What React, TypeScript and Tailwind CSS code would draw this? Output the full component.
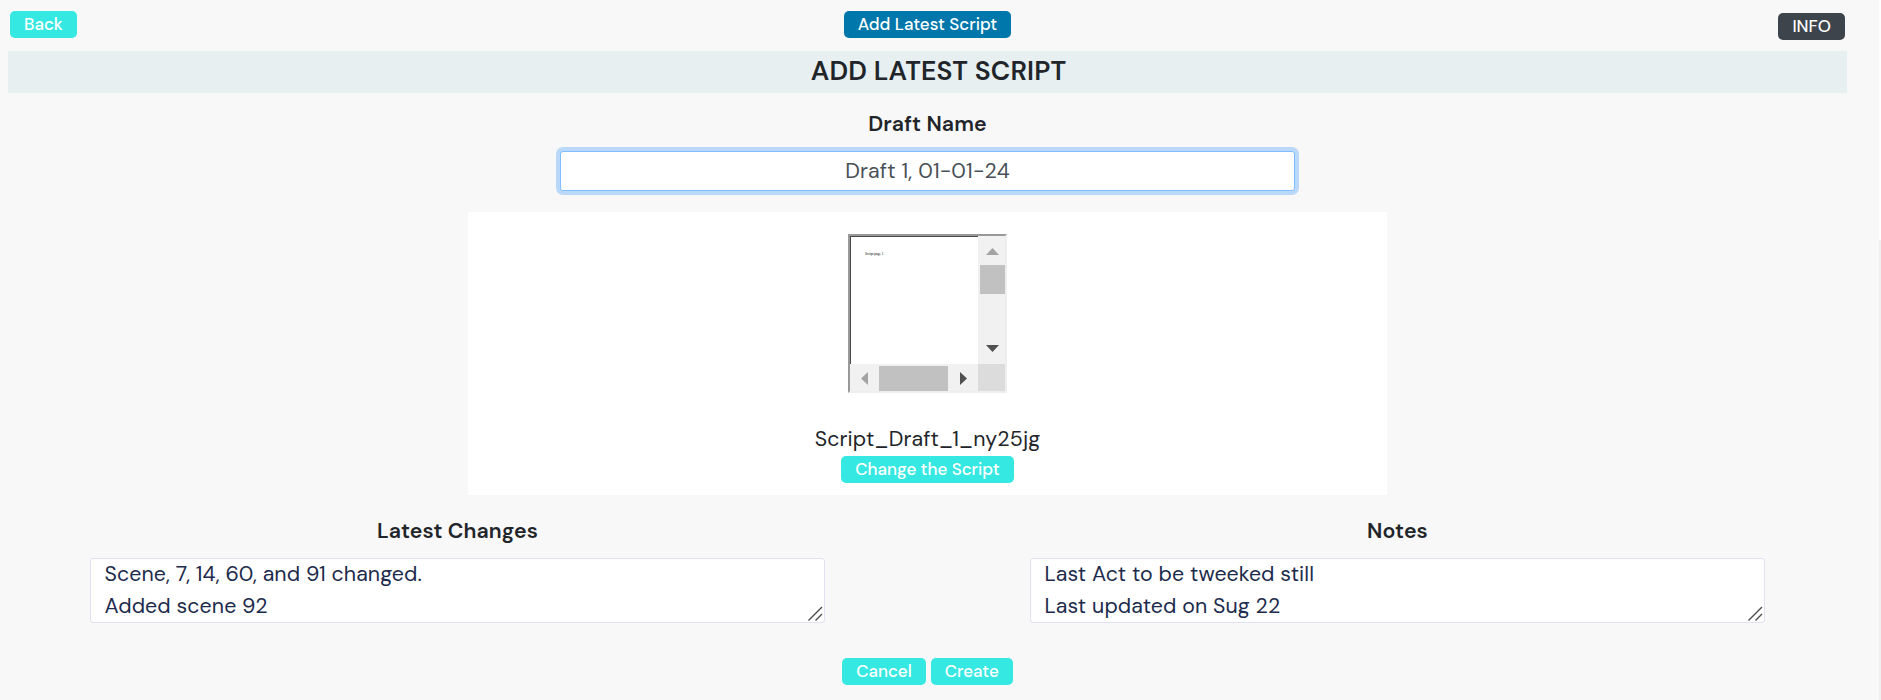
import type { ReactNode } from 'react';

const tones = {
  teal: 'bg-[#35e8e1]',
  blue: 'bg-[#0077aa]',
  dark: 'bg-[#3d444b]',
};

function Button({ tone = 'teal', children }: { tone?: keyof typeof tones; children: ReactNode }) {
  return (
    <button
      type="button"
      className={`flex h-[27px] items-center whitespace-nowrap rounded-[5px] px-[14px] text-[17px] font-medium leading-[27px] text-white ${tones[tone]}`}
    >
      {children}
    </button>
  );
}

function Label({ children }: { children: ReactNode }) {
  return <div className="h-8 text-center font-semibold tracking-[0.1px]">{children}</div>;
}

function NotesField({ label, lines }: { label: string; lines: string[] }) {
  return (
    <div className="w-[735px]">
      <Label>{label}</Label>
      <div className="relative mt-[11px] h-[65px] rounded-[3px] border border-[#e2e1f1] bg-white pl-[13.5px] tracking-[0.09px] text-[#1c2b4b]">
        <div className="-mt-px">
          {lines.map((line) => (
            <div key={line}>{line}</div>
          ))}
        </div>
        <svg
          className="absolute bottom-[1px] right-[1px]"
          width="16"
          height="16"
          viewBox="0 0 16 16"
          fill="none"
          stroke="#4a4a4a"
          strokeWidth="1.4"
        >
          <path d="M1.5 15.5 15 2M8.5 15.5 15 9" />
        </svg>
      </div>
    </div>
  );
}

function ScriptPreview() {
  return (
    <div className="grid h-[159px] w-[159px] grid-cols-[128px_27px] grid-rows-[128px_27px] border-2 border-b-[#eeeeee] border-l-[#999999] border-r-[#eeeeee] border-t-[#999999]">
      <div className="border-l border-t border-[#4a4a4a] bg-white pl-[14px] pt-[15px]">
        <div className="font-['Liberation_Serif'] text-[3.5px] leading-[4px] tracking-normal text-black">
          Script page 1
        </div>
      </div>
      <div className="flex flex-col items-end bg-[#f1f1f1] pt-3">
        <svg className="mr-1.5" width="13" height="7" viewBox="0 0 13 7">
          <path d="M6.5 0 13 7H0z" fill="#a3a3a3" />
        </svg>
        <div className="mt-[10px] h-[29px] w-[25px] bg-[#c1c1c1]" />
        <svg className="mr-1.5 mt-[51px]" width="13" height="7" viewBox="0 0 13 7">
          <path d="M0 0h13L6.5 7z" fill="#505050" />
        </svg>
      </div>
      <div className="flex items-end bg-[#f1f1f1] pl-[11px]">
        <svg className="mb-1.5" width="7" height="13" viewBox="0 0 7 13">
          <path d="M7 0v13L0 6.5z" fill="#a3a3a3" />
        </svg>
        <div className="ml-[11px] h-[25px] w-[69px] bg-[#c1c1c1]" />
        <svg className="mb-1.5 ml-3" width="7" height="13" viewBox="0 0 7 13">
          <path d="M0 0v13l7-6.5z" fill="#505050" />
        </svg>
      </div>
      <div className="bg-[#dcdcdc]" />
    </div>
  );
}

export default function App() {
  return (
    <div className="flex h-[700px] w-full overflow-hidden bg-[#f8f8f8] font-['DM_Sans','Inter',sans-serif] text-[21.33px] leading-8 tracking-[0.14px] text-[#212529]">
      <main className="ml-2 flex w-[1839px] shrink-0 flex-col items-center">
        <header className="grid h-[51px] w-full shrink-0 grid-cols-3 items-start px-0.5 pt-[11px] tracking-normal">
          <div className="flex justify-start">
            <Button>Back</Button>
          </div>
          <div className="flex justify-center">
            <Button tone="blue">Add Latest Script</Button>
          </div>
          <div className="flex justify-end pt-0.5">
            <Button tone="dark">INFO</Button>
          </div>
        </header>

        <h1 className="h-[42px] w-full bg-[#e7eff1] pl-[22px] text-center text-[26.67px] font-semibold leading-10">
          ADD LATEST SCRIPT
        </h1>

        <div className="mt-[15px]">
          <Label>Draft Name</Label>
        </div>
        <div className="mt-[11px] h-10 w-[735px] rounded-[3px] border border-[#80bdff] bg-white text-center leading-[38px] text-[#495057] ring-4 ring-[#b9d8fa]">
          Draft 1, 01-01-24
        </div>

        <section className="mt-[21px] flex h-[283px] w-[919px] flex-col items-center bg-white pt-[22px]">
          <ScriptPreview />
          <div className="mb-[1px] mt-[30px]">Script_Draft_1_ny25jg</div>
          <div className="tracking-normal">
            <Button>Change the Script</Button>
          </div>
        </section>

        <section className="mt-5 flex w-full justify-between px-[82px]">
          <NotesField
            label="Latest Changes"
            lines={['Scene, 7, 14, 60, and 91 changed.', 'Added scene 92']}
          />
          <NotesField
            label="Notes"
            lines={['Last Act to be tweeked still', 'Last updated on Sug 22']}
          />
        </section>

        <div className="mt-[35px] flex gap-[5px] tracking-normal">
          <Button>Cancel</Button>
          <Button>Create</Button>
        </div>
      </main>
      <div className="ml-auto w-0.5 bg-[#f0f0f0]">
        <div className="h-60 bg-white" />
      </div>
    </div>
  );
}
